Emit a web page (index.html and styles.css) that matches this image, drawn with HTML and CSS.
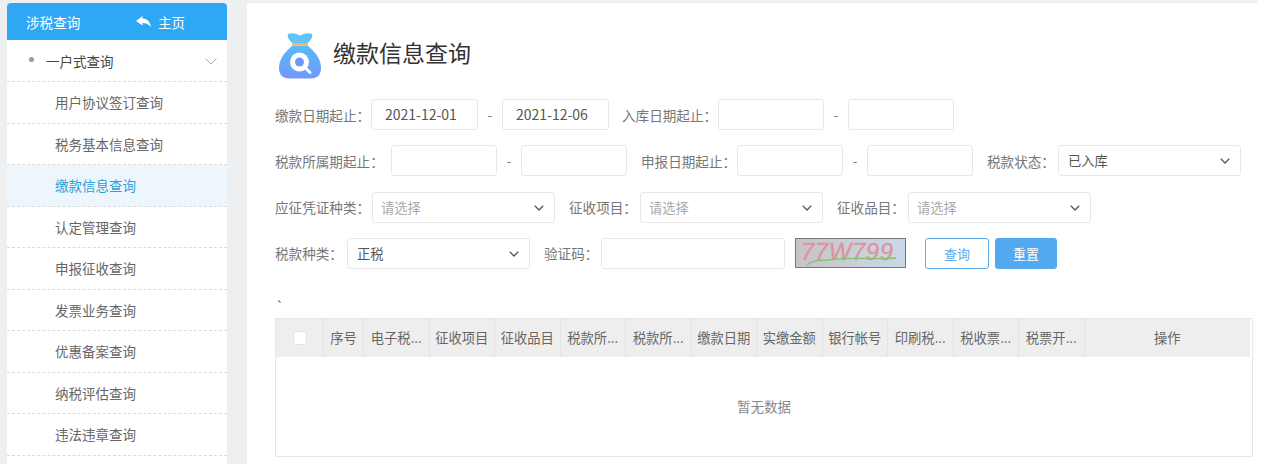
FILE: index.html
```html
<!DOCTYPE html>
<html lang="zh-CN">
<head>
<meta charset="utf-8">
<title>缴款信息查询</title>
<link rel="stylesheet" href="styles.css">
</head>
<body>
<div class="page">
  <aside class="side">
    <div class="side-head">
      <span class="side-title">涉税查询</span>
      <span class="side-home">
        <svg class="home-icon" viewBox="0 0 15 11"><path d="M6.500 0 L0 5 L6.500 9.500 V7 C10 7 12.500 8.500 15 11 C14.500 6.500 11.500 2.800 6.500 2.600 Z"/></svg>
        主页
      </span>
    </div>
    <ul class="menu">
      <li class="menu-item menu-root">
        <i class="dot"></i><span>一户式查询</span>
        <svg class="root-chev" viewBox="0 0 12 7"><path d="M0.500 0.500 L6 6 L11.500 0.500"/></svg>
      </li>
      <li class="menu-item">用户协议签订查询</li>
      <li class="menu-item">税务基本信息查询</li>
      <li class="menu-item active">缴款信息查询</li>
      <li class="menu-item">认定管理查询</li>
      <li class="menu-item">申报征收查询</li>
      <li class="menu-item">发票业务查询</li>
      <li class="menu-item">优惠备案查询</li>
      <li class="menu-item">纳税评估查询</li>
      <li class="menu-item">违法违章查询</li>
    </ul>
  </aside>
  <main class="main">
    <header class="title-row">
      <svg class="bag" viewBox="0 0 42 48">
        <defs>
          <linearGradient id="bagfill" x1="0" y1="0" x2="0" y2="1"><stop offset="0" stop-color="#55bdf6"/><stop offset="1" stop-color="#7396fb"/></linearGradient>
        </defs>
        <path d="M9 3 C12 1.500 16 2 21 4.500 C26 2 30 1.500 33 3 C34 6 32 9.500 28.500 12 H13.500 C10 9.500 8 6 9 3 Z" fill="#63c2f6"/>
        <path d="M13.500 14.500 H28.500 C35 20 42 27 42 37 C42 44 38 47.500 32 47.500 H10 C4 47.500 0 44 0 37 C0 27 7 20 13.500 14.500 Z" fill="url(#bagfill)"/>
        <rect x="13" y="12" width="16" height="2.500" fill="#f6b45e"/>
        <circle cx="20.500" cy="31" r="9.500" fill="#fff"/>
        <circle cx="20.500" cy="31" r="4.500" fill="#6f97fb"/>
        <path d="M27 37.500 L31 41.500" stroke="#fff" stroke-width="3" stroke-linecap="round"/>
      </svg>
      <h1 class="page-title">缴款信息查询</h1>
    </header>

    <form class="form">
      <div class="row">
        <label class="lbl l96">缴款日期起止：</label>
        <div class="field w107">2021-12-01</div><span class="sep">-</span><div class="field w107">2021-12-06</div>
        <label class="lbl l96 next tight">入库日期起止：</label>
        <div class="field w106"></div><span class="sep">-</span><div class="field w106"></div>
      </div>
      <div class="row">
        <label class="lbl l116">税款所属期起止：</label>
        <div class="field w106"></div><span class="sep">-</span><div class="field w106"></div>
        <label class="lbl l96 next">申报日期起止：</label>
        <div class="field w106"></div><span class="sep">-</span><div class="field w106"></div>
        <label class="lbl l71 next">税款状态：</label>
        <div class="field select w183 small">已入库<svg class="chev" viewBox="0 0 10 6"><path d="M0.800 0.800 L5 5 L9.200 0.800"/></svg></div>
      </div>
      <div class="row">
        <label class="lbl l97">应征凭证种类：</label>
        <div class="field select w183 holder">请选择<svg class="chev" viewBox="0 0 10 6"><path d="M0.800 0.800 L5 5 L9.200 0.800"/></svg></div>
        <label class="lbl l71 next">征收项目：</label>
        <div class="field select w183 holder">请选择<svg class="chev" viewBox="0 0 10 6"><path d="M0.800 0.800 L5 5 L9.200 0.800"/></svg></div>
        <label class="lbl l71 next">征收品目：</label>
        <div class="field select w183 holder">请选择<svg class="chev" viewBox="0 0 10 6"><path d="M0.800 0.800 L5 5 L9.200 0.800"/></svg></div>
      </div>
      <div class="row">
        <label class="lbl l72">税款种类：</label>
        <div class="field select w183 small">正税<svg class="chev" viewBox="0 0 10 6"><path d="M0.800 0.800 L5 5 L9.200 0.800"/></svg></div>
        <label class="lbl l57 next">验证码：</label>
        <div class="field w184"></div>
        <svg class="captcha" viewBox="0 0 111 30">
          <defs><linearGradient id="capbg" x1="0" y1="0" x2="1" y2="0"><stop offset="0" stop-color="#c9c3c6"/><stop offset="1" stop-color="#c9d9ea"/></linearGradient></defs>
          <rect x="0.500" y="0.500" width="110" height="29" fill="url(#capbg)" stroke="#77787c"/>
          <text x="6" y="22" class="captcha-text" textLength="92">77W799</text>
          <path d="M12 27 C20 20 28 24 40 21 C60 19 80 22 101 20" fill="none" stroke="#7cc86a" stroke-width="1.300"/>
        </svg>
        <button type="button" class="btn btn-plain">查询</button>
        <button type="button" class="btn btn-solid">重置</button>
      </div>
    </form>

    <div class="tick">`</div>

    <section class="table">
      <div class="thead">
        <div class="th c-check"><i class="checkbox"></i></div>
        <div class="th c-seq">序号</div>
        <div class="th c-col">电子税...</div>
        <div class="th c-col">征收项目</div>
        <div class="th c-col">征收品目</div>
        <div class="th c-col">税款所...</div>
        <div class="th c-col">税款所...</div>
        <div class="th c-col">缴款日期</div>
        <div class="th c-col">实缴金额</div>
        <div class="th c-col">银行帐号</div>
        <div class="th c-col">印刷税...</div>
        <div class="th c-col">税收票...</div>
        <div class="th c-col">税票开...</div>
        <div class="th c-op">操作</div>
      </div>
      <div class="empty">暂无数据</div>
    </section>
  </main>
</div>
</body>
</html>
```
FILE: styles.css
```css
* { box-sizing: border-box; }
html, body { margin: 0; height: 100%; overflow: hidden; background: #fff; }
body { font-family: "Noto Sans CJK SC", "Noto Sans", sans-serif; color: #666; font-size: 13px; }
.page { display: flex; width: 1267px; height: 464px; padding: 3px 10px 0 0; background: linear-gradient(#eeeff1, #eeeff1) left top / 1257px 100% no-repeat; }

.side { width: 220px; margin-left: 7px; flex: none; background: #fff; border-radius: 4px 4px 0 0; overflow: hidden; }
.side-head { height: 37px; background: #2ea7f4; color: #fff; display: flex; align-items: center; font-size: 13.600px; padding-left: 19px; }
.side-title { width: 110px; }
.side-home { display: flex; align-items: center; gap: 7px; }
.home-icon { width: 15px; height: 11px; fill: #fff; }
.menu { list-style: none; margin: 0; padding: 0; }
.menu-item { height: 41.500px; display: flex; align-items: center; padding-left: 48px; border-bottom: 1px dashed #dcdcdc; font-size: 13.500px; color: #666; }
.menu-root { position: relative; padding-left: 22px; color: #444; height: 42px; }
.dot { width: 5px; height: 5px; border-radius: 50%; background: #9a9a9a; margin-right: 12px; margin-top: -3px; }
.root-chev { position: absolute; right: 10px; top: 18px; width: 12px; height: 7px; fill: none; stroke: #aaa; stroke-width: 1; }
.active { background: #eef6fd; color: #2a9fd8; }

.main { width: 1010px; margin-left: 20px; background: #fff; padding-left: 28px; flex: none; overflow: hidden; }
.title-row { display: flex; align-items: center; height: 48px; margin-top: 28px; margin-left: 4px; }
.bag { width: 42px; height: 48px; flex: none; }
.page-title { margin: 0 0 0 12px; font-size: 23px; font-weight: 400; color: #333; position: relative; top: -3px; }

.form { margin-top: 20px; }
.row { display: flex; align-items: center; height: 31px; margin-bottom: 15.300px; }
.lbl { font-size: 13.600px; color: #777; white-space: nowrap; flex: none; }
.l57 { width: 57px; }
.l71 { width: 71px; }
.l72 { width: 72px; }
.l96 { width: 96px; }
.l97 { width: 97px; }
.l116 { width: 116px; }
.lbl.next { margin-left: 14px; }
.lbl.next.tight { margin-left: 13px; }
.field { height: 31px; border: 1px solid #e8e8e8; border-radius: 3px; background: #fff; color: #555; font-size: 14px; line-height: 29px; padding-left: 13px; flex: none; position: relative; }
.w106 { width: 106px; }
.w107 { width: 107px; }
.w183 { width: 183px; }
.w184 { width: 184px; }
.small { font-size: 13.300px; padding-left: 9px; }
.holder { color: #aaa; font-size: 13.300px; padding-left: 8px; }
.sep { width: 24px; text-align: center; color: #777; flex: none; }
.chev { position: absolute; right: 10px; top: 12px; width: 10px; height: 6px; fill: none; stroke: #555; stroke-width: 1.300; }
.captcha { width: 111px; height: 30px; margin-left: 10px; flex: none; }
.captcha-text { font-family: "Liberation Sans", sans-serif; font-style: italic; font-size: 24px; fill: #dd949c; stroke: #dd949c; stroke-width: 0.300; }
.btn { height: 31px; border-radius: 3px; font-family: inherit; font-size: 13px; padding: 0; flex: none; }
.btn-plain { width: 64px; margin-left: 19px; background: #fff; border: 1px solid #5aabea; color: #5aabea; }
.btn-solid { width: 62px; margin-left: 6px; background: #52a9f0; border: 1px solid #52a9f0; color: #fff; }

.tick { height: 19px; margin-top: 27px; font-size: 13px; line-height: 19px; color: #555; padding-left: 1px; }
.table { width: 978px; height: 139px; margin-top: 3px; border: 1px solid #e6e6e6; }
.thead { display: flex; height: 38px; background: #eeeeee; width: 974px; }
.th { height: 38px; display: flex; align-items: center; justify-content: center; font-size: 13.300px; color: #666; border-right: 1px solid #e3e3e3; white-space: nowrap; overflow: hidden; flex: none; }
.c-check { width: 48px; }
.c-seq { width: 40px; }
.c-col { width: 65.500px; }
.c-op { flex: 1; border-right: 0; }
.checkbox { width: 14px; height: 14px; background: #fff; border: 1px solid #e2e2e2; border-radius: 3px; }
.empty { height: 99px; display: flex; align-items: center; justify-content: center; font-size: 13.500px; color: #888; padding-bottom: 1px; }
```
